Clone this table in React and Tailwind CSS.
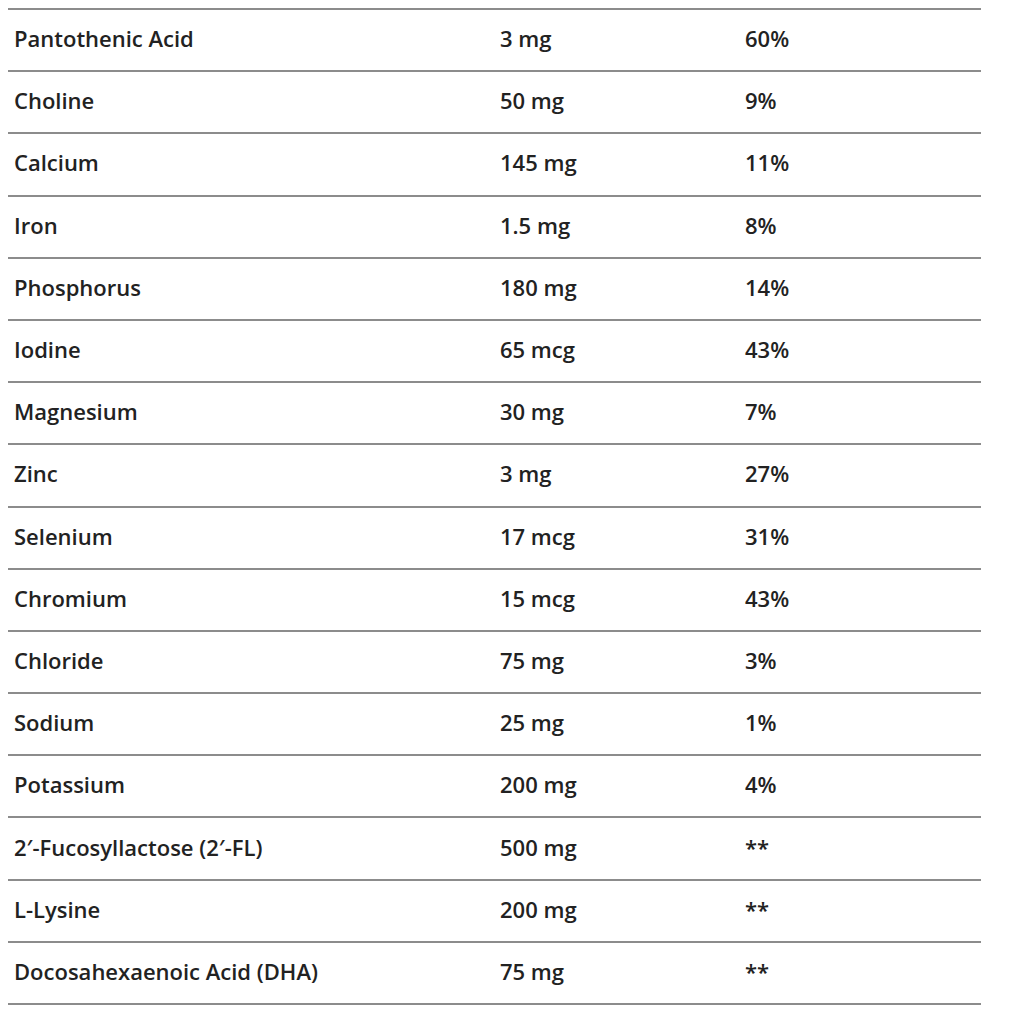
import React from 'react'

const rows = [
  ['Pantothenic Acid', '3 mg', '60%'],
  ['Choline', '50 mg', '9%'],
  ['Calcium', '145 mg', '11%'],
  ['Iron', '1.5 mg', '8%'],
  ['Phosphorus', '180 mg', '14%'],
  ['Iodine', '65 mcg', '43%'],
  ['Magnesium', '30 mg', '7%'],
  ['Zinc', '3 mg', '27%'],
  ['Selenium', '17 mcg', '31%'],
  ['Chromium', '15 mcg', '43%'],
  ['Chloride', '75 mg', '3%'],
  ['Sodium', '25 mg', '1%'],
  ['Potassium', '200 mg', '4%'],
  ['2′-Fucosyllactose (2′-FL)', '500 mg', '**'],
  ['L-Lysine', '200 mg', '**'],
  ['Docosahexaenoic Acid (DHA)', '75 mg', '**'],
]

export default function App() {
  return (
    <div className="min-h-screen bg-white pt-2 pl-2" style={{ fontFamily: '"Open Sans", sans-serif' }}>
      <div className="w-[973px] border-t-2 border-[#8c8c8c]">
        {rows.map(([name, amount, dv]) => (
          <div
            key={name}
            className="h-[62.2px] pb-[3px] flex items-center border-b-2 border-[#8c8c8c] text-[22px] font-semibold text-[#222]"
          >
            <div className="w-[492px] pl-[6px]">{name}</div>
            <div className="w-[245px]">{amount}</div>
            <div>{dv}</div>
          </div>
        ))}
      </div>
    </div>
  )
}
